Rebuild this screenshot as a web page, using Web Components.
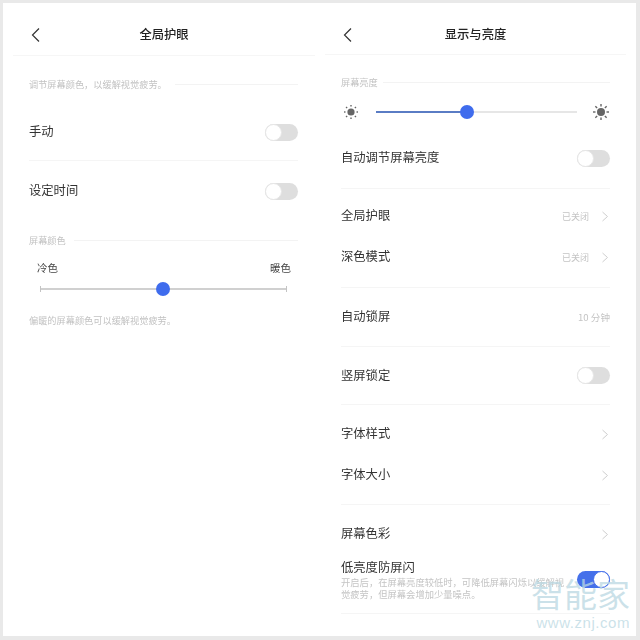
<!DOCTYPE html>
<html>
<head>
<meta charset="utf-8">
<style>
  html, body { margin: 0; height: 100%; background: #fff; }
  body { width: 640px; height: 640px; overflow: hidden; position: relative; font-family: "Noto Sans CJK SC", "Liberation Sans", sans-serif; }
  #page { display: grid; grid-template-columns: 317px 316px; padding: 3px 4px 4px 3px; box-sizing: border-box; width: 640px; height: 640px; background: #e9e9e9; filter: blur(.3px); }
</style>
</head>
<body>
<div id="page">
  <phone-screen heading="全局护眼" style="--pl:26px;--pr:22px;--hl:10px;--hr:5px;--hh:53px;--ht:10px">
    <section-head style="padding-top:21px">调节屏幕颜色，以缓解视觉疲劳。</section-head>
    <setting-row label="手动" toggle="off" style="height:56px;margin-top:13px"></setting-row>
    <hr-line></hr-line>
    <setting-row label="设定时间" toggle="off" style="height:60px"></setting-row>
    <section-head style="padding-top:12px">屏幕颜色</section-head>
    <color-slider></color-slider>
    <small-note style="margin-top:17px">偏暖的屏幕颜色可以缓解视觉疲劳。</small-note>
  </phone-screen>
  <phone-screen heading="显示与亮度" style="--pl:21px;--pr:26px;--hl:5px;--hr:10px;--hh:52px;--ht:11px">
    <section-head style="padding-top:20px;--gap:5px">屏幕亮度</section-head>
    <bright-slider></bright-slider>
    <setting-row label="自动调节屏幕亮度" toggle="off" style="height:46px;margin-top:8px"></setting-row>
    <hr-line style="margin-top:7px"></hr-line>
    <setting-row label="全局护眼" value="已关闭" arrow style="height:54px"></setting-row>
    <setting-row label="深色模式" value="已关闭" arrow style="height:28px"></setting-row>
    <hr-line style="margin-top:16px"></hr-line>
    <setting-row label="自动锁屏" value="10 分钟" style="height:58px;--vs:9.6px"></setting-row>
    <hr-line></hr-line>
    <setting-row label="竖屏锁定" toggle="off" style="height:57px"></setting-row>
    <hr-line></hr-line>
    <setting-row label="字体样式" arrow style="height:58px"></setting-row>
    <setting-row label="字体大小" arrow style="height:24px"></setting-row>
    <hr-line style="margin-top:17px"></hr-line>
    <setting-row label="屏幕色彩" arrow style="height:58px"></setting-row>
    <flash-row></flash-row>
    <hr-line style="margin-top:12px"></hr-line>
  </phone-screen>
</div>
<water-mark></water-mark>
<script>
  // small helper so every element gets its open shadow root the same way
  class Base extends HTMLElement {
    constructor() {
      super();
      this.attachShadow({ mode: 'open' });
    }
  }

  class PhoneScreen extends Base {
    connectedCallback() {
      this.shadowRoot.innerHTML = `
        <style>
          :host { display: block; background: #fff; overflow: hidden; }
          header { box-sizing: border-box; height: var(--hh); padding-top: var(--ht); display: flex; align-items: center; justify-content: center; position: relative; border-bottom: 1px solid #f6f6f6; margin: 0 var(--hr) 0 var(--hl); font-size: 12.3px; font-weight: 500; color: #222; }
          svg { position: absolute; left: 18px; top: 25px; }
          main { padding: 0 var(--pr) 0 var(--pl); }
        </style>
        <header>
          <svg width="10" height="14" viewBox="0 0 10 14"><path d="M8 .5 L1.5 7 L8 13.5" fill="none" stroke="#333" stroke-width="1.2"/></svg>
          <span>${this.getAttribute('heading')}</span>
        </header>
        <main><slot></slot></main>`;
    }
  }

  class SectionHead extends Base {
    connectedCallback() {
      this.shadowRoot.innerHTML = `
        <style>
          :host { display: flex; align-items: center; gap: var(--gap, 8px); font-size: 9.2px; color: #c2c2c2; line-height: 14px; }
          i { flex: 1; height: 1px; background: #f3f3f3; }
        </style>
        <slot></slot><i></i>`;
    }
  }

  class SmallNote extends Base {
    connectedCallback() {
      this.shadowRoot.innerHTML = `
        <style>:host { display: block; font-size: 9.2px; color: #c2c2c2; line-height: 14px; }</style>
        <slot></slot>`;
    }
  }

  class HrLine extends Base {
    connectedCallback() {
      this.shadowRoot.innerHTML = `<style>:host { display: block; height: 1px; background: #f5f5f5; }</style>`;
    }
  }

  class ToggleSwitch extends Base {
    connectedCallback() {
      const on = this.hasAttribute('on');
      this.shadowRoot.innerHTML = `
        <style>
          :host { display: block; width: 33px; height: 17px; border-radius: 9px; position: relative; background: ${on ? '#4570ea' : '#dedede'}; }
          b { position: absolute; top: 0; ${on ? 'right' : 'left'}: 0; width: 15px; height: 15px; border-radius: 50%; background: #fff; border: 1px solid ${on ? '#4570ea' : '#e6e6e6'}; }
        </style>
        <b></b>`;
    }
  }

  class SettingRow extends Base {
    connectedCallback() {
      const value = this.getAttribute('value');
      const toggle = this.getAttribute('toggle');
      this.shadowRoot.innerHTML = `
        <style>
          :host { display: flex; align-items: center; font-size: 12.3px; color: #333; }
          .label { flex: 1; margin-top: -2px; }
          .value { font-size: var(--vs, 9px); color: #c4c4c4; }
          svg { margin-left: 12px; margin-right: 1px; }
        </style>
        <span class="label">${this.getAttribute('label')}</span>
        ${value ? `<span class="value">${value}</span>` : ''}
        ${this.hasAttribute('arrow') ? `<svg width="8" height="11" viewBox="0 0 8 11"><path d="M1.5 1 L6.5 5.5 L1.5 10" fill="none" stroke="#cfcfcf" stroke-width="1"/></svg>` : ''}
        ${toggle ? `<toggle-switch ${toggle === 'on' ? 'on' : ''}></toggle-switch>` : ''}`;
    }
  }

  class ColorSlider extends Base {
    connectedCallback() {
      this.shadowRoot.innerHTML = `
        <style>
          :host { display: block; padding: 0 7px 0 8px; margin-top: 13px; font-size: 10.5px; color: #444; }
          .names { display: flex; justify-content: space-between; line-height: 16px; }
          .track { height: 14px; margin-top: 6px; position: relative; }
          .track::before { content: ""; position: absolute; left: 3px; right: 4px; top: 6px; height: 2px; background: #d0d0d0; }
          i { position: absolute; top: 4px; width: 1px; height: 6px; background: #c4c4c4; }
          b { position: absolute; left: 119px; top: 0; width: 14px; height: 14px; border-radius: 50%; background: #3f6ced; }
        </style>
        <div class="names"><span>冷色</span><span>暖色</span></div>
        <div class="track"><i style="left:3px"></i><i style="right:4px"></i><b></b></div>`;
    }
  }

  const sunIcon = (size, r, len) => {
    const rays = [0, 45, 90, 135, 180, 225, 270, 315]
      .map((a) => `<rect x="-0.7" y="${-size / 2}" width="1.4" height="${len}" fill="#666" transform="rotate(${a})"/>`)
      .join('');
    return `<svg width="${size}" height="${size}" viewBox="${-size / 2} ${-size / 2} ${size} ${size}"><circle r="${r}" fill="#666"/>${rays}</svg>`;
  };

  class BrightSlider extends Base {
    connectedCallback() {
      this.shadowRoot.innerHTML = `
        <style>
          :host { display: flex; align-items: center; height: 30px; margin-top: 8px; padding: 0 1px 0 3px; }
          svg { flex: none; }
          .track { flex: 1; height: 2px; background: #e6e6e6; position: relative; margin: 0 16px 0 18px; }
          .fill { position: absolute; left: 0; top: 0; height: 2px; width: 91px; background: #5a7cc4; }
          b { position: absolute; left: 84px; top: -6px; width: 14px; height: 14px; border-radius: 50%; background: #3f6ced; }
        </style>
        ${sunIcon(14, 3.6, 1.5)}
        <div class="track"><div class="fill"></div><b></b></div>
        ${sunIcon(16, 4, 2.5)}`;
    }
  }

  class FlashRow extends Base {
    connectedCallback() {
      this.shadowRoot.innerHTML = `
        <style>
          :host { display: grid; grid-template-columns: 1fr 33px; column-gap: 10px; row-gap: 2px; margin-top: -4px; }
          .t { grid-column: 1 / 3; font-size: 12.3px; color: #333; line-height: 16px; }
          .d { font-family: "Liberation Sans", "Noto Sans CJK SC", sans-serif; font-size: 9.3px; color: #c4c4c4; line-height: 12px; white-space: nowrap; }
          toggle-switch { margin-top: -6px; }
        </style>
        <div class="t">低亮度防屏闪</div>
        <div class="d">开启后，在屏幕亮度较低时，可降低屏幕闪烁以缓解视<br>觉疲劳，但屏幕会增加少量噪点。</div>
        <toggle-switch on></toggle-switch>`;
    }
  }

  class WaterMark extends Base {
    connectedCallback() {
      this.shadowRoot.innerHTML = `
        <style>
          :host { position: absolute; left: 530px; top: 581px; width: 100px; text-align: right; color: rgba(186, 216, 226, .75); font-family: "Liberation Sans", "Noto Sans CJK SC", sans-serif; }
          .cn { font-size: 33px; line-height: 30px; margin-bottom: 4px; }
          .en { font-size: 15px; line-height: 15px; letter-spacing: .55px; }
        </style>
        <div class="cn">智能家</div>
        <div class="en">www.znj.com</div>`;
    }
  }

  customElements.define('phone-screen', PhoneScreen);
  customElements.define('section-head', SectionHead);
  customElements.define('small-note', SmallNote);
  customElements.define('hr-line', HrLine);
  customElements.define('toggle-switch', ToggleSwitch);
  customElements.define('setting-row', SettingRow);
  customElements.define('color-slider', ColorSlider);
  customElements.define('bright-slider', BrightSlider);
  customElements.define('flash-row', FlashRow);
  customElements.define('water-mark', WaterMark);
</script>
</body>
</html>
